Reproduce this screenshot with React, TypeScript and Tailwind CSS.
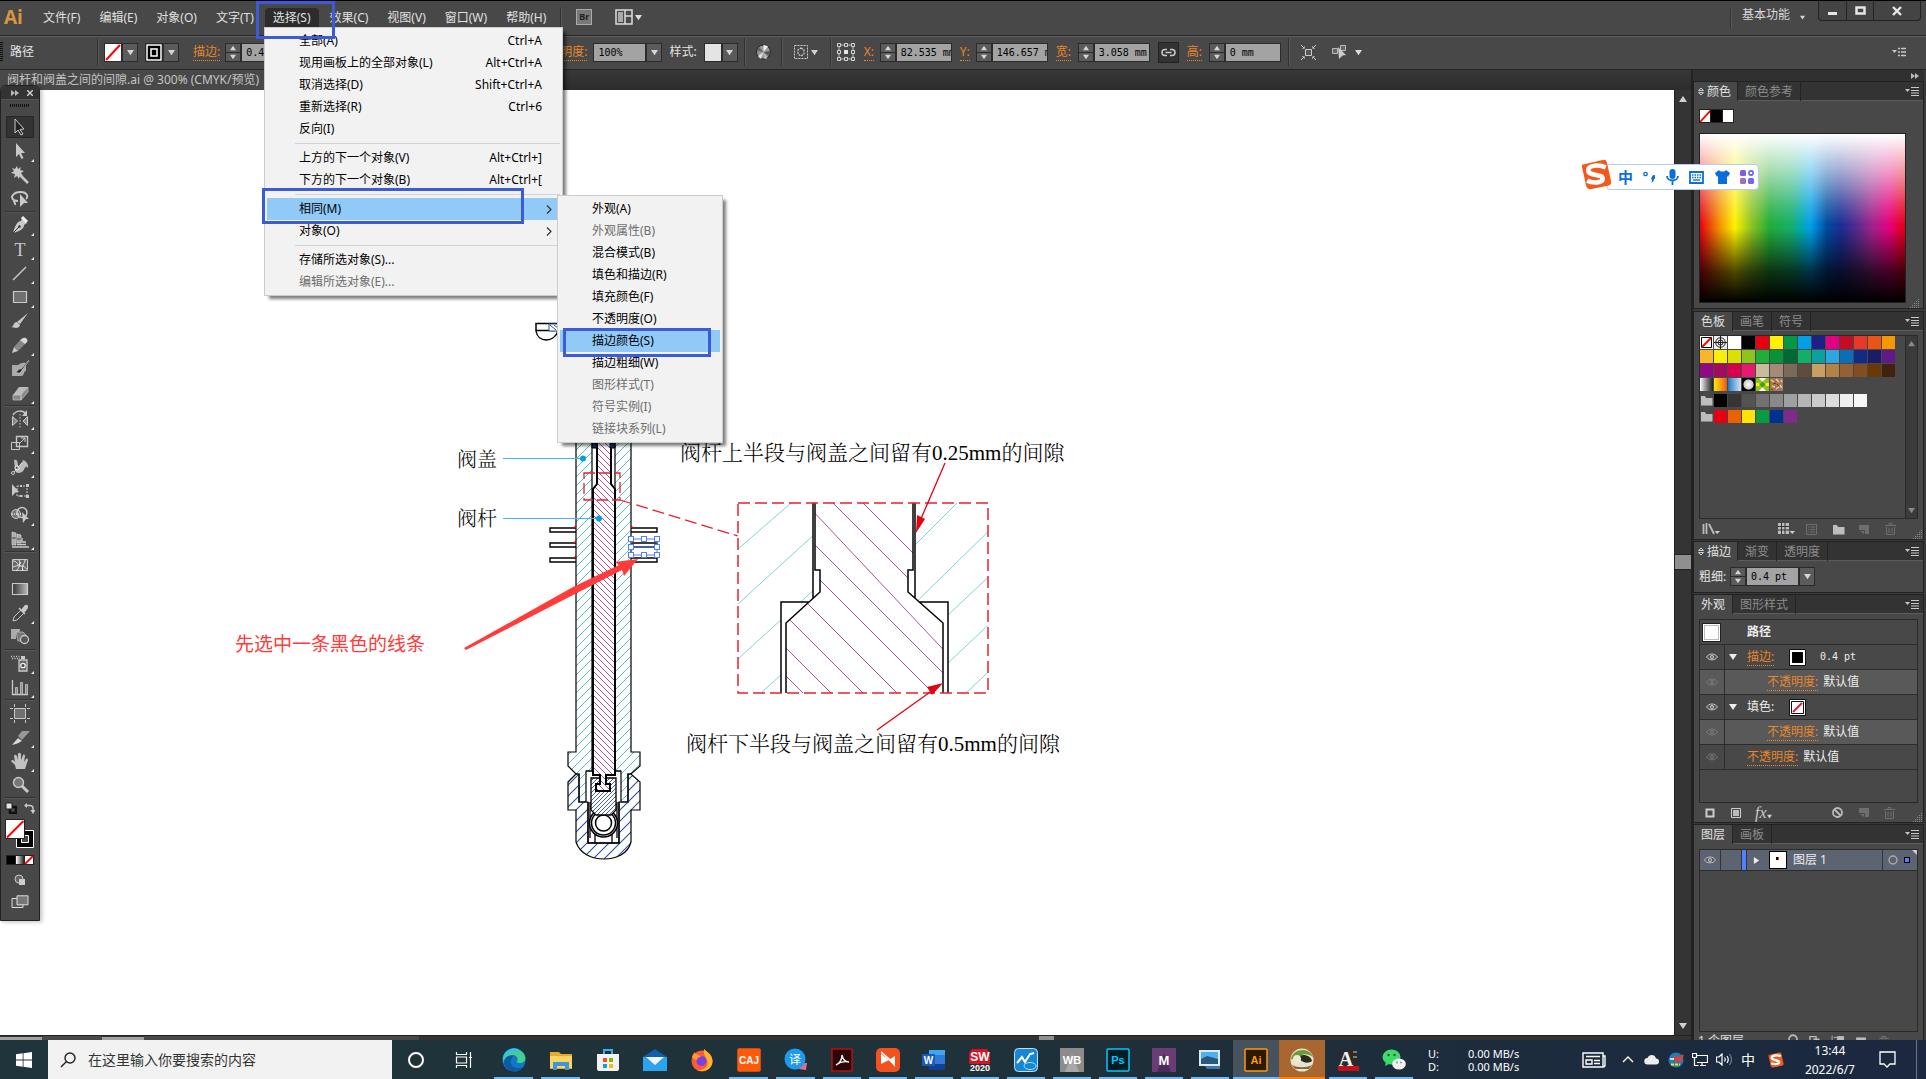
import React from "react";

type Kids = { children?: React.ReactNode };

const ORANGE = "text-[#e8862a]";

/* ---------- small shared pieces ---------- */

function Tri({ dir = "down", className = "", size = 7 }: { dir?: "down" | "up" | "right"; className?: string; size?: number }) {
  const d = dir === "down" ? "M0 1h8L4 7z" : dir === "up" ? "M0 7h8L4 1z" : "M1 0v8l6-4z";
  return (
    <svg width={size} height={size} viewBox="0 0 8 8" className={"shrink-0 " + className} aria-hidden="true">
      <path d={d} fill="currentColor" />
    </svg>
  );
}

function Sep() {
  return <div className="h-7 w-[2px] shrink-0 border-l border-[#333] bg-[#575757]" />;
}

function Spinner() {
  return (
    <div className="flex h-[19px] w-4 shrink-0 flex-col border border-[#2b2b2b] bg-[#5b5b5b] text-[#d6d6d6]">
      <button aria-label="增加" className="flex flex-1 items-center justify-center border-b border-[#2b2b2b]">
        <Tri dir="up" size={6} />
      </button>
      <button aria-label="减少" className="flex flex-1 items-center justify-center">
        <Tri size={6} />
      </button>
    </div>
  );
}

function DropBtn({ label }: { label: string }) {
  return (
    <button aria-label={label} className="flex h-[19px] w-4 shrink-0 items-center justify-center border border-[#2b2b2b] bg-[#5b5b5b] text-[#d6d6d6]">
      <Tri />
    </button>
  );
}

function Field({ id, value, w }: { id: string; value: string; w: string }) {
  return (
    <input
      id={id}
      defaultValue={value}
      className={"h-[19px] shrink-0 border border-[#2b2b2b] bg-[#a3a3a3] pl-1 font-['DejaVu_Sans_Mono',monospace] text-[10px] text-black outline-none " + w}
    />
  );
}

function OrangeLabel({ htmlFor, children }: Kids & { htmlFor?: string }) {
  return (
    <label htmlFor={htmlFor} className={"shrink-0 whitespace-nowrap border-b border-dotted border-[#e8862a] text-xs leading-4 " + ORANGE}>
      {children}
    </label>
  );
}

function PanelMenuIcon({ className = "" }: { className?: string }) {
  return (
    <svg width="14" height="9" viewBox="0 0 14 9" className={className} aria-hidden="true">
      <path d="M0 2h5L2.500 5z" fill="#c8c8c8" />
      <path d="M6 .5h8M6 3.500h8M6 6h8M6 8.500h8" stroke="#c8c8c8" />
    </svg>
  );
}

/* ---------- menu bar ---------- */

const menuNames = ["文件(F)", "编辑(E)", "对象(O)", "文字(T)", "选择(S)", "效果(C)", "视图(V)", "窗口(W)", "帮助(H)"];

function MenuBar() {
  return (
    <header className="flex h-9 shrink-0 items-start border-t border-b border-t-black border-b-[#2a2a2a] bg-[#484848] pr-[5px]">
      <div className="mt-1 w-[30px] pl-1 font-['Open_Sans',sans-serif] text-[19px] leading-6 font-bold text-[#d9963c]">Ai</div>
      <nav className="mt-[7px] flex gap-[3px] pl-[5px]">
        {menuNames.map((m) => (
          <button
            key={m}
            className={
              "h-[19px] px-2 text-xs whitespace-nowrap " + (m === "选择(S)" ? "rounded-t-sm bg-[#2c2c2c] text-[#e0e0e0]" : "text-[#e0e0e0]")
            }
          >
            {m}
          </button>
        ))}
      </nav>
      <div className="mt-[6px] ml-[6px] h-5 w-[2px] border-l border-[#333] bg-[#575757]" />
      <button aria-label="Bridge" className="mt-2 ml-[14px] h-4 w-4 border border-[#aaa] bg-[#777] text-[9px] leading-[14px] font-bold text-[#222]">
        Br
      </button>
      <button aria-label="排列文档" className="mt-2 ml-[23px] flex items-center gap-[2px] text-[#ddd]">
        <svg width="18" height="16" viewBox="0 0 18 16">
          <path d="M1 1h16v14H1zM10 1v14M10 7h7" fill="#4a4a4a" stroke="#ddd" strokeWidth="1.500" />
          <path d="M3 3h5v10H3z" fill="#aaa" />
        </svg>
        <Tri />
      </button>
      <div className="flex-1" />
      <div className="mt-2 h-5 w-[2px] border-l border-[#333] bg-[#575757]" />
      <button className="mt-[6px] ml-[10px] flex items-center gap-[10px] pr-[13px] text-xs text-[#d8d8d8]">
        基本功能 <Tri size={5} className="mt-1" />
      </button>
      <div className="flex h-5 divide-x divide-[#222] rounded-b border border-t-0 border-[#222] bg-[#444]">
        <button aria-label="最小化" className="flex w-7 items-center justify-center">
          <svg width="9" height="11">
            <path d="M0 7h9v3H0z" fill="#e6e6e6" />
          </svg>
        </button>
        <button aria-label="最大化" className="flex w-[27px] items-center justify-center">
          <svg width="11" height="10">
            <path d="M1.500 1.500h8v6h-8z" fill="none" stroke="#e6e6e6" strokeWidth="2.500" />
          </svg>
        </button>
        <button aria-label="关闭" className="flex w-[46px] items-center justify-center">
          <svg width="10" height="10">
            <path d="M1 1l8 8M9 1L1 9" stroke="#e6e6e6" strokeWidth="2.400" />
          </svg>
        </button>
      </div>
    </header>
  );
}

function ControlBar() {
  return (
    <div className="flex h-[34px] shrink-0 items-center border-t border-b border-t-[#5c5c5c] border-b-[#262626] bg-[#484848] pb-[2px] text-xs text-[#e4e4e4]">
      <svg width="4" height="20" className="shrink-0">
        <path d="M1.500 0v20" stroke="#111" strokeWidth="3" strokeDasharray="1 1" />
      </svg>
      <span className="ml-[6px] w-[87px]">路径</span>
      <Sep />
      <div className="ml-[5px] flex">
        <svg width="18" height="19" className="border border-[#2b2b2b] bg-white">
          <path d="M1 16L15 1" stroke="#f00" strokeWidth="2" />
        </svg>
        <DropBtn label="填色" />
      </div>
      <div className="ml-[7px] flex">
        <svg width="18" height="19" className="border border-[#2b2b2b] bg-black">
          <path d="M1 1h14v15H1zM5 5h6v7H5z" fill="none" stroke="#fff" strokeWidth="1.500" />
        </svg>
        <DropBtn label="描边颜色" />
      </div>
      <div className="ml-[14px] flex items-center gap-[5px]">
        <OrangeLabel htmlFor="sw">描边:</OrangeLabel>
        <div className="flex">
          <Spinner />
          <Field id="sw" value="0.4 pt" w="w-[53px]" />
          <DropBtn label="粗细" />
        </div>
      </div>
      <div className="w-[226px] shrink-0" />
      <div className="flex items-center gap-[6px]">
        <OrangeLabel htmlFor="op">不透明度:</OrangeLabel>
        <div className="flex">
          <Field id="op" value="100%" w="w-[53px]" />
          <DropBtn label="不透明度" />
        </div>
      </div>
      <span className="ml-[7px]">样式:</span>
      <div className="ml-[7px] flex">
        <div className="h-[19px] w-[18px] border border-[#2b2b2b] bg-[#e4e4e4]" />
        <DropBtn label="图形样式" />
      </div>
      <div className="ml-[6px]">
        <Sep />
      </div>
      <svg width="15" height="16" viewBox="0 0 15 16" className="ml-[10px]">
        <circle cx="7.500" cy="8" r="7" fill="#999" stroke="#222" />
        <path d="M7.500 8V1A7 7 0 0 1 12 2.500z" fill="#eee" />
        <path d="M7.500 8L2 12a7 7 0 0 0 3 3z" fill="#ddd" />
        <path d="M7.500 8l7-1a7 7 0 0 1-2 5z" fill="#555" />
        <path d="M7.500 8L1 7a7 7 0 0 1 2-4z" fill="#666" />
        <path d="M7.500 8l1 7a7 7 0 0 0 3-1z" fill="#bbb" />
      </svg>
      <div className="ml-[10px]">
        <Sep />
      </div>
      <button aria-label="重新着色" className="ml-[11px] flex items-center gap-[3px] text-[#d0d0d0]">
        <svg width="14" height="14" viewBox="0 0 14 14">
          <path d="M.5.5h13v13H.5z" fill="none" stroke="#ccc" strokeDasharray="2 1" />
          <path d="M7 3l3 2v4l-3 2-3-2V5z" fill="none" stroke="#ccc" strokeWidth="1.300" strokeDasharray="2 1" />
        </svg>
        <Tri />
      </button>
      <div className="ml-3">
        <Sep />
      </div>
      <svg width="20" height="20" viewBox="0 0 20 20" className="ml-1 shrink-0">
        <path d="M3 3h14v14H3z" fill="none" stroke="#bbb" />
        <path d="M1.500 1.500h3v3h-3zM8.500 1.500h3v3h-3zM15.500 1.500h3v3h-3zM1.500 8.500h3v3h-3zM15.500 8.500h3v3h-3zM1.500 15.500h3v3h-3zM8.500 15.500h3v3h-3zM15.500 15.500h3v3h-3z" fill="#484848" stroke="#d6d6d6" />
        <path d="M8 8h4v4H8z" fill="#e6e6e6" />
      </svg>
      <Measure id="x" label="X:" value="82.535 mm" lw="w-4" />
      <Measure id="y" label="Y:" value="146.657 mm" lw="w-4" />
      <Measure id="w" label="宽:" value="3.058 mm" lw="w-[22px]" />
      <button aria-label="约束宽度和高度比例" className="ml-2 flex h-[21px] w-[21px] shrink-0 items-center justify-center border border-[#222] bg-[#333]">
        <svg width="15" height="9" viewBox="0 0 15 9">
          <path d="M6 1.500H4a3 3 0 0 0 0 6h2M9 1.500h2a3 3 0 0 1 0 6H9M4.500 4.500h6" fill="none" stroke="#ccc" strokeWidth="1.500" />
        </svg>
      </button>
      <Measure id="h" label="高:" value="0 mm" lw="w-[22px]" />
      <div className="ml-[7px]">
        <Sep />
      </div>
      <svg width="15" height="15" viewBox="0 0 15 15" className="ml-[11px] shrink-0">
        <path d="M4.500 4.500h6v6h-6z" fill="#555" stroke="#ccc" />
        <path d="M0 0l3 3M15 0l-3 3M0 15l3-3M15 15l-3-3" stroke="#ccc" />
        <path d="M3.500 1v2.500H1M11.500 1v2.500H14M3.500 14v-2.500H1M11.500 14v-2.500H14" fill="none" stroke="#999" />
      </svg>
      <button aria-label="选择类似对象" className="ml-[15px] flex items-center gap-[7px] text-[#ddd]">
        <svg width="17" height="16" viewBox="0 0 17 16">
          <path d="M1.500 4.500h5v5h-5zM9.500 1.500h5v5h-5z" fill="#666" stroke="#bbb" />
          <path d="M7 3l8 8-3.500.5L8 15z" fill="#ccc" />
        </svg>
        <Tri />
      </button>
      <div className="flex-1" />
      <svg width="14" height="10" viewBox="0 0 14 10" className="mr-5">
        <path d="M0 3h5L2.500 6z" fill="#c8c8c8" />
        <path d="M6 1.500h2M9 1.500h5M6 5h2M9 5h5M6 8.500h2M9 8.500h5" stroke="#c8c8c8" strokeWidth="1.500" />
      </svg>
    </div>
  );
}

function Measure({ id, label, value, lw }: { id: string; label: string; value: string; lw: string }) {
  return (
    <div className="ml-2 flex shrink-0 items-center">
      <div className={"flex shrink-0 " + lw}>
        <OrangeLabel htmlFor={id}>{label}</OrangeLabel>
      </div>
      <Spinner />
      <Field id={id} value={value} w="w-14" />
    </div>
  );
}

/* ---------- select menu ---------- */

type Item = { t: string; k?: string; dis?: boolean; hi?: boolean; sub?: boolean } | null;

const selectMenu: Item[] = [
  { t: "全部(A)", k: "Ctrl+A" },
  { t: "现用画板上的全部对象(L)", k: "Alt+Ctrl+A" },
  { t: "取消选择(D)", k: "Shift+Ctrl+A" },
  { t: "重新选择(R)", k: "Ctrl+6" },
  { t: "反向(I)" },
  null,
  { t: "上方的下一个对象(V)", k: "Alt+Ctrl+]" },
  { t: "下方的下一个对象(B)", k: "Alt+Ctrl+[" },
  null,
  { t: "相同(M)", hi: true, sub: true },
  { t: "对象(O)", sub: true },
  null,
  { t: "存储所选对象(S)..." },
  { t: "编辑所选对象(E)...", dis: true },
];

const sameMenu: Item[] = [
  { t: "外观(A)" },
  { t: "外观属性(B)", dis: true },
  { t: "混合模式(B)" },
  { t: "填色和描边(R)" },
  { t: "填充颜色(F)" },
  { t: "不透明度(O)" },
  { t: "描边颜色(S)", hi: true },
  { t: "描边粗细(W)" },
  { t: "图形样式(T)", dis: true },
  { t: "符号实例(I)", dis: true },
  { t: "链接块系列(L)", dis: true },
];

function PopupMenu({ items, className }: { items: Item[]; className: string }) {
  return (
    <ul role="menu" className={"absolute border border-[#ccc] bg-[#f2f2f2] p-[2px] text-xs shadow-[4px_4px_3px_-1px_rgba(0,0,0,0.5)] " + className}>
      {items.map((it, i) =>
        it === null ? (
          <li key={i} role="separator" className="flex h-[7px] items-center pl-7">
            <div className="h-px w-full bg-[#d4d4d4]" />
          </li>
        ) : (
          <li key={i} role="none">
            <button
              role="menuitem"
              disabled={it.dis}
              className={
                "flex h-[22px] w-full items-center pr-[18px] pl-8 whitespace-nowrap " + (it.hi ? "bg-[#91c9f7] " : "") + (it.dis ? "text-[#6d6d6d]" : "text-black")
              }
            >
              <span className="flex-1 text-left">{it.t}</span>
              {it.k && <span>{it.k}</span>}
              {it.sub && (
                <svg width="6" height="9" viewBox="0 0 6 9" className="-mr-[10px]">
                  <path d="M1 .5l4 4-4 4" fill="none" stroke="#333" strokeWidth="1.200" />
                </svg>
              )}
            </button>
          </li>
        ),
      )}
    </ul>
  );
}

/* ---------- left tools ---------- */

const L = "#c9c9c9";
const toolIcons: React.ReactNode[][] = [
  [
    <path key="a" d="M5 2l9 10-4 .5 3 4.500-2 1-3-5-3 3z" fill="#222" stroke={L} />,
    <path key="a" d="M6 2l9 10h-4l2.500 5-2 1L9 13l-3 3z" fill={L} />,
    <g key="a"><path d="M7 1l1 3 3-2-1 3 4 1-3 2 2 3-3-1-1 4-2-3-3 2 1-4-4-1 3-2-2-3 3 1z" fill={L} /><path d="M10 10l8 8" stroke={L} strokeWidth="2.500" /></g>,
    <g key="a"><path d="M8 12C2 12 1 8 3 6c3-4 12-4 14 0 1 2 0 3-1 4M4 11c-1 3 2 2 1 5" fill="none" stroke={L} strokeWidth="1.800" /><path d="M10 5l8 9h-4l-4 4z" fill={L} /></g>,
  ],
  [
    <g key="a"><path d="M12 3l5 5-3 2c0 4-4 6-11 8C5 11 7 6 11 6z" fill={L} /><path d="M3 18l6-6" stroke="#333" /><circle cx="9.500" cy="11.500" r="1.200" fill="#333" /><path d="M12 2l5 5" stroke="#eee" strokeWidth="3" /></g>,
    <text key="a" x="10" y="16.500" textAnchor="middle" fontSize="18" fontFamily="Liberation Serif" fill={L}>T</text>,
    <path key="a" d="M3 17L16 4" stroke={L} strokeWidth="1.500" />,
    <path key="a" d="M3.500 4.500h13v11h-13z" fill="#707070" stroke={L} strokeWidth="1.200" />,
    <g key="a"><path d="M18 2l-8 11-3-2z" fill={L} /><path d="M7 11l3 3c-1 4-5 3-9 2 3 0 2-5 6-5z" fill={L} /></g>,
    <g key="a"><path d="M4 12l8-9 5 4-9 9z" fill="#888" /><path d="M4 12l4 4-6 2z" fill={L} /><path d="M12 4c2-3 7 0 5 3l-2 2-5-4z" fill="#d8d8d8" /></g>,
    <g key="a"><path d="M2 6h6c2-1 4-3 8-2v8c-3 0-1 5-5 5H2z" fill="#aaa" /><path d="M19 1l-8 9c-2-1-3 3-6 3 4 2 6 1 7-2l7-9" fill="#222" stroke={L} strokeWidth=".7" /></g>,
    <g key="a"><path d="M9 4h9l-7 8H3z" fill="#bbb" /><path d="M3 12h8v5H3zM11 12l7-8v5l-7 8z" fill="#888" stroke={L} strokeWidth=".7" /></g>,
  ],
  [
    <g key="a"><path d="M3 6c3-5 10-5 13-1" fill="none" stroke={L} strokeWidth="1.500" /><path d="M17 1v6h-5z" fill={L} /><path d="M2.500 7.500v9l5-4.500zM17.500 7.500v9L13 12z" fill="#888" stroke={L} /><path d="M10 5v14" stroke={L} strokeDasharray="1.500 1.500" /></g>,
    <g key="a" fill="none" stroke={L}><path d="M6.500 3.500h11v10h-11z" strokeWidth="1.400" /><path d="M1.500 9.500h8v7h-8z" /><path d="M10 10l5-5M11 5h4v4" /></g>,
    <g key="a"><path d="M4 3c5-2 3 6 5 8 1-6 3-4 4-8 4 1 6 6 5 8-3-4-3 2-6 4-4 2-7 1-7-3z" fill="#bbb" /><circle cx="3" cy="16" r="1.500" fill="none" stroke={L} /><circle cx="7" cy="11" r="2" fill="#444" stroke="#fff" /><path d="M4 15l8-9" stroke="#fff" strokeWidth=".7" /></g>,
    <g key="a"><path d="M7 5h10v10H7z" fill="none" stroke={L} strokeDasharray="2 1" /><path d="M2 3l7 8H6l-4 4z" fill={L} /><path d="M16 3h3v3h-3zM16 14h3v3h-3zM10 4h2v2h-2zM10 14h2v2h-2z" fill={L} /></g>,
    <g key="a"><circle cx="6" cy="9" r="4.500" fill="#777" stroke={L} /><circle cx="12" cy="7.500" r="5" fill="none" stroke={L} strokeWidth="1.500" /><path d="M2 9h10" stroke="#fff" strokeDasharray="1 1" /><path d="M12 7l7 7h-3l-3 4z" fill={L} /></g>,
    <g key="a"><path d="M2 3l4 1v12H2zM7 5l4 1v8H7z" fill="#aaa" stroke="#ddd" strokeWidth=".6" /><path d="M2 9h4M7 10h4" stroke="#444" /><path d="M2 18h17M7 15.500h9M12 9v4h4" fill="none" stroke={L} strokeWidth="1.300" /></g>,
  ],
  [
    <g key="a"><path d="M2.500 4.500h15v11h-15z" fill="#666" stroke={L} /><path d="M3 6c5 0 4 5 8 5s4 2 6 3M6 16c3-3 5-7 3-11M13 16c-2-6 2-7 2-11M3 12c4-2 6 0 8-5" fill="none" stroke="#eee" /></g>,
    <path key="a" d="M2.500 4.500h15v11h-15z" fill="url(#toolGrad)" stroke={L} strokeWidth="1.200" />,
    <g key="a"><path d="M3 18l1-4 7-7 3 3-7 7z" fill="#444" stroke={L} /><path d="M9 5l6 6M12 7l3-4c2-1 3 0 2 2l-3 4z" fill={L} stroke={L} strokeWidth="1.500" /></g>,
    <g key="a"><path d="M1 2h9v2L6 7v5H1z" fill="#aaa" /><path d="M6 5h7l3 3v6H8z" fill="#777" stroke={L} strokeWidth=".7" /><circle cx="14.500" cy="12.500" r="4" fill="#555" stroke={L} strokeWidth="1.300" /></g>,
  ],
  [
    <g key="a"><path d="M9 7h8v11H9z" fill="#666" stroke={L} strokeWidth="1.300" /><path d="M11 3h4v3h-4z" fill={L} /><circle cx="13" cy="12.500" r="2.200" fill="#444" stroke="#eee" strokeWidth="1.300" /><path d="M1 3.500h9M2 5.500h8" stroke={L} strokeDasharray="1 1.500" strokeWidth="1.400" /></g>,
    <g key="a"><path d="M2.500 3v14.500H18" fill="none" stroke={L} strokeWidth="1.300" /><path d="M5.500 10.500h2v7h-2zM10.500 5.500h2v12h-2zM15.500 7.500h2v10h-2z" fill="#888" stroke={L} strokeWidth=".8" /></g>,
  ],
  [
    <g key="a"><path d="M4.500 5.500h11v10h-11z" fill="#707070" stroke={L} /><path d="M0 5.500h3M17 5.500h3M0 15.500h3M17 15.500h3M4.500 1v3M4.500 17v3M15.500 1v3M15.500 17v3" stroke={L} /></g>,
    <g key="a"><path d="M2 18l6-7 4 3c-3 2-6 3-10 4z" fill="#d8d8d8" /><path d="M8 9l4-5h8l-8 9z" fill="#999" /></g>,
    <path key="a" d="M6 18l-1-4-4-4c1-2 3-1 4 1L4 5c1-2 2-1 3 0l1 4V3c1-2 2-1 3 0v6l2-5c1-1 2 0 2 1l-1 6 2-3c1-1 2 0 2 1l-2 6-1 3z" fill="#c2c2c2" />,
    <g key="a"><circle cx="8.500" cy="7.500" r="5" fill="#777" stroke={L} strokeWidth="1.400" /><path d="M12 11l6 6" stroke={L} strokeWidth="3" /></g>,
  ],
];
const noFlyout = new Set(["0-0", "0-2", "0-3", "1-4", "1-6", "2-3", "3-0", "3-1", "3-3", "5-0", "5-3"]);
const toolNames = [
  ["选择工具", "直接选择工具", "魔棒工具", "套索工具"],
  ["钢笔工具", "文字工具", "直线段工具", "矩形工具", "画笔工具", "铅笔工具", "斑点画笔工具", "橡皮擦工具"],
  ["镜像工具", "比例缩放工具", "变形工具", "自由变换工具", "形状生成器工具", "透视网格工具"],
  ["网格工具", "渐变工具", "吸管工具", "混合工具"],
  ["符号喷枪工具", "柱形图工具"],
  ["画板工具", "切片工具", "抓手工具", "缩放工具"],
];

function ToolPanel() {
  return (
    <aside className="absolute top-[85px] left-0 z-10 w-10 rounded-t-md border border-[#222] bg-[#484848] shadow-[2px_1px_4px_rgba(0,0,0,0.25)]">
      <div className="flex h-[13px] items-center justify-end gap-2 rounded-t-md bg-[#333] pr-[6px]">
        <svg width="8" height="6" viewBox="0 0 8 6">
          <path d="M0 0l4 3-4 3zM4 0l4 3-4 3z" fill="#bbb" />
        </svg>
        <svg width="6" height="6" viewBox="0 0 6 6">
          <path d="M0 0l6 6M6 0L0 6" stroke="#ccc" strokeWidth="1.500" />
        </svg>
      </div>
      <div className="flex h-4 items-start justify-center border-t border-[#555] pt-1">
        <svg width="20" height="3">
          <path d="M0 1.500h20" stroke="#111" strokeWidth="3" strokeDasharray="1 1" />
        </svg>
      </div>
      <svg width="0" height="0" className="absolute">
        <linearGradient id="toolGrad">
          <stop offset="0" stopColor="#333" />
          <stop offset="1" stopColor="#bbb" />
        </linearGradient>
      </svg>
      <div className="flex flex-col">
        {toolIcons.map((g, gi) => (
          <div key={gi} className="flex flex-col">
            {g.map((ic, i) => (
              <div key={i} className="flex h-6 items-center justify-center">
                <button
                  aria-label={toolNames[gi][i]}
                  className={"relative flex h-[22px] w-7 items-center justify-center " + (gi === 0 && i === 0 ? "border border-[#262626] bg-[#333]" : "")}
                >
                  <svg width="20" height="20" viewBox="0 0 20 20">{ic}</svg>
                  {!noFlyout.has(gi + "-" + i) && (
                    <svg width="3" height="3" className="absolute right-0 bottom-0">
                      <path d="M3 0v3H0z" fill="#eee" />
                    </svg>
                  )}
                </button>
              </div>
            ))}
            <div className="mx-1 h-[2px] border-t border-[#333] bg-[#555]" />
          </div>
        ))}
      </div>
      <div className="flex h-[18px] items-center justify-between px-1">
        <svg width="12" height="12" viewBox="0 0 12 12">
          <path d="M5 5h6v6H5z" fill="none" stroke="#111" strokeWidth="2.500" />
          <path d="M1 1h6v6H1z" fill="#e6e6e6" stroke="#222" />
        </svg>
        <svg width="11" height="11" viewBox="0 0 11 11">
          <path d="M2 2.500h4c2 0 3 1 3 3V8" fill="none" stroke={L} strokeWidth="1.400" />
          <path d="M3 0v5L0 2.500zM6.500 7h5L9 11z" fill={L} />
        </svg>
      </div>
      <svg width="30" height="32" viewBox="0 0 30 32" className="mx-auto mt-px">
        <path d="M11.500 12.500h17v17h-17z" fill="#000" stroke="#fff" />
        <path d="M16.500 17.500h7v7h-7z" fill="#484848" stroke="#fff" />
        <path d="M.5 1.500h19v19H.5z" fill="#fff" stroke="#222" />
        <path d="M2 19.500L18.500 3" stroke="#f00" strokeWidth="2" />
      </svg>
      <svg width="28" height="10" viewBox="0 0 28 10" className="mx-auto mt-[5px]">
        <linearGradient id="bw">
          <stop offset="0" stopColor="#fff" />
          <stop offset="1" stopColor="#222" />
        </linearGradient>
        <path d="M0 0h28v10H0z" fill="#222" />
        <path d="M1 1h8v8H1z" fill="#000" />
        <path d="M10 1h8v8h-8z" fill="url(#bw)" />
        <path d="M19 1h8v8h-8z" fill="#fff" />
        <path d="M19 9l8-8" stroke="#f00" strokeWidth="1.800" />
      </svg>
      <div className="flex h-[30px] items-center justify-center">
        <svg width="12" height="12" viewBox="0 0 12 12">
          <circle cx="5" cy="5" r="4" fill="#666" stroke={L} />
          <path d="M5 5h6v6H5z" fill="#ccc" />
        </svg>
      </div>
      <div className="flex h-[25px] items-start justify-center">
        <svg width="18" height="14" viewBox="0 0 18 14">
          <path d="M1 3.500h11v9H1z" fill="#555" stroke="#ddd" />
          <path d="M6 .8h11v9H6z" fill="#777" stroke="#ddd" />
        </svg>
      </div>
    </aside>
  );
}

/* ---------- artwork ---------- */

const handles: [number, number][] = [
  [631, 539], [644, 539], [657, 539], [631, 547], [657, 547], [631, 555], [644, 555], [657, 555],
];

function Artwork() {
  return (
    <svg className="absolute top-0 left-0" width="1200" height="800" viewBox="0 90 1200 800" role="img" aria-label="阀杆与阀盖间隙示意图">
      <defs>
        <pattern id="hc" width="9" height="9" patternUnits="userSpaceOnUse">
          <path d="M-1 10L10-1M-1 1L1-1M8 10l2-2" stroke="#55c4bf" strokeWidth="1" />
        </pattern>
        <pattern id="hp" width="6" height="6" patternUnits="userSpaceOnUse">
          <path d="M-1-1l8 8M5-1l2 2M-1 5l2 2" stroke="#b0539f" strokeWidth="1" />
        </pattern>
        <pattern id="hb" width="11" height="11" patternUnits="userSpaceOnUse">
          <path d="M-1 12L12-1M-1 1L1-1M10 12l2-2" stroke="#2d4f9e" strokeWidth="1.100" />
        </pattern>
        <pattern id="hd" width="4" height="4" patternUnits="userSpaceOnUse">
          <path d="M-1 5l6-6M-1 1l2-2M3 5l2-2" stroke="#2d4f9e" strokeWidth=".9" />
        </pattern>
        <clipPath id="dc1"><path d="M738 503h75v95l-4 4h-28v91h-43z" /></clipPath>
        <clipPath id="dc2"><path d="M915 503h73v190h-40v-91h-29l-4-4z" /></clipPath>
        <clipPath id="dc3"><path d="M815 503h98v67h-5v22l35 31v70H786v-70l34-31v-22h-5z" /></clipPath>
      </defs>
      {/* small clipped symbol */}
      <path d="M536 323.500h22v7h-22zM536 331c2 12 18 12 22 0" fill="#fff" stroke="#000" strokeWidth="1.500" />
      <path d="M549 324h9v7h-9z" fill="#fff" stroke="#2d4f9e" />
      <path d="M550 325l6 5M554 325l5 4" stroke="#2d4f9e" />

      {/* cover body */}
      <path d="M576 430V752h-8v14l8 8h3v28h7v-31h6V430zM631 430V752h9v14l-9 8h-3v28h-7v-31h-6V430z" fill="#fff" />
      <path d="M576 430V752h-8v14l8 8h3v28h7v-31h6V430zM631 430V752h9v14l-9 8h-3v28h-7v-31h-6V430z" fill="url(#hc)" stroke="#000" strokeWidth="1.200" />
      {/* lower nut */}
      <path d="M576 774l-8 8v28h8v32c4 12 16 17 28 17s24-5 27-17v-32h9v-28l-9-8h-3v28h-9v41h-31v-41h-9v-28z" fill="url(#hb)" stroke="#000" strokeWidth="1.200" />
      <path d="M588 802v41h31v-41M590 802v36M617 802v36M595 832v11M612 832v11" fill="none" stroke="#000" strokeWidth="1.300" />
      <path d="M586 771h35" stroke="#000" />
      <circle cx="603.500" cy="823" r="14" fill="#fff" stroke="#000" strokeWidth="1.500" />
      <circle cx="603.500" cy="823" r="12" fill="none" stroke="#000" strokeWidth="1.500" />
      <circle cx="603.500" cy="823" r="8" fill="none" stroke="#000" strokeWidth="1.500" />
      <path d="M591 778h9v6h-4v7h14v-7h-4v-6h10v32l-5 5h-15l-5-5z" fill="#fff" />
      <path d="M591 778h9v6h-4v7h14v-7h-4v-6h10v32l-5 5h-15l-5-5z" fill="url(#hd)" stroke="#000" strokeWidth="1.300" />
      {/* stem */}
      <path d="M597 430v54l-4 5v286h7v9h-4v7h14v-7h-4v-9h9V489l-4-5v-54z" fill="#fff" />
      <path d="M597 430v54l-4 5v286h7v9h-4v7h14v-7h-4v-9h9V489l-4-5v-54z" fill="url(#hp)" stroke="#000" strokeWidth="2" />
      <path d="M592 443h5v5h-5zM610 443h5v5h-5z" fill="#1d2c5b" stroke="#000" />

      {/* fins */}
      <path d="M576 528h-26v4h26M576 543h-26v4h26M576 558h-26v4h26M631 528h26v4h-26M631 543h26v4h-26M631 558h26v4h-26" fill="none" stroke="#000" strokeWidth="1.400" />
      <path d="M576 525v3h-3zM576 540v3h-3zM576 555v3h-3zM631 525v3h3zM631 540v3h3z" fill="#e60012" />
      <path d="M631 539h26v16h-26zM631 547h26" fill="none" stroke="#4f80ff" />
      {handles.map(([x, y]) => (
        <rect key={x + "-" + y} x={x - 2.5} y={y - 2.5} width="5" height="5" fill="#fff" stroke="#4f80ff" />
      ))}

      {/* callouts */}
      <g stroke="#e6202e" fill="none" strokeWidth="1.300">
        <path d="M584 473h36v27h-36z" strokeDasharray="11 4" />
        <path d="M620 500l118 36" strokeDasharray="12 5" />
      </g>
      <path d="M503 458.500h80M503 518.500h96" stroke="#3fb8ee" />
      <circle cx="583" cy="458.500" r="3" fill="#00a0e9" />
      <circle cx="599" cy="518.500" r="3" fill="#00a0e9" />

      {/* magnified detail */}
      <g clipPath="url(#dc1)" stroke="#7fd3d3">
        <path d="M738 549l60-52M738 604l90-82M738 659l90-82M738 714l90-82" />
      </g>
      <g clipPath="url(#dc2)" stroke="#7fd3d3">
        <path d="M900 560l60-60M900 618l100-98M930 632l70-66M930 680l70-66M930 727l70-66" />
      </g>
      <g clipPath="url(#dc3)" stroke="#a8569c">
        <path d="M860 500l60 60M810 480l140 140M810 508l160 170M810 540l160 160M800 560l160 160M786 582l130 130M780 610l100 100M780 642l70 70M780 670l40 40" />
      </g>
      <g fill="none" stroke="#000" strokeWidth="1.500">
        <path d="M813 503v95M809 602h-28v91M815 503v67h5v22l-34 31v70" />
        <path d="M915 503v95M919 602h29v91M913 503v67h-5v22l35 31v70" />
      </g>
      <path d="M738 503h250v190H738z" fill="none" stroke="#e6202e" strokeWidth="1.500" strokeDasharray="12 5" />
      <g stroke="#e60012" fill="#e60012">
        <path d="M945 463l-25 58M877 730l56-40" strokeWidth="1.300" fill="none" />
        <path d="M916 533l1-18 8 4zM943 683l-16 4 5 8z" stroke="none" />
      </g>

      {/* labels */}
      <g fontFamily="'Liberation Serif','Noto Serif CJK SC','Noto Sans CJK SC',serif" fontSize="20" fontWeight="300" fill="#000">
        <text x="457" y="467">阀盖</text>
        <text x="457" y="526">阀杆</text>
        <text x="680" y="460" fontSize="21">阀杆上半段与阀盖之间留有0.25mm的间隙</text>
        <text x="686" y="751" fontSize="21">阀杆下半段与阀盖之间留有0.5mm的间隙</text>
      </g>
      <text x="235" y="651" fontSize="19" fontFamily="'Noto Sans CJK SC',sans-serif" fill="#ff3b3b">先选中一条黑色的线条</text>
      <path d="M464 648l109-61 46-22-4-3 23-3-14 17-2-6-45 23-111 57z" fill="#ff3b3b" />
    </svg>
  );
}

/* ---------- right panels ---------- */

function Tabs({ names, arrow }: { names: string[]; arrow?: boolean }) {
  return (
    <div role="tablist" className="flex h-[19px] shrink-0 border-b border-[#5c5c5c] bg-[#333] text-xs leading-[18px]">
      {names.map((n, i) => (
        <button
          key={n}
          role="tab"
          aria-selected={i === 0}
          className={
            "flex h-[19px] items-center whitespace-nowrap border-r border-[#242424] " +
            (i === 0 ? "bg-[#484848] text-[#e0e0e0] " + (arrow ? "pr-[6px] pl-1" : "px-[7px]") : "px-[7px] text-[#8c8c8c]")
          }
        >
          {i === 0 && arrow && (
            <svg width="6" height="9" viewBox="0 0 6 9" className="mr-[3px]">
              <path d="M.5 3.500L3 1l2.500 2.500zM.5 5.500L3 8l2.500-2.500z" fill="none" stroke="#ccc" />
            </svg>
          )}
          {n}
        </button>
      ))}
      <div className="flex-1" />
      <button aria-label="面板菜单" className="mr-1 flex items-center">
        <PanelMenuIcon />
      </button>
    </div>
  );
}

function Panel({ children, className = "" }: Kids & { className?: string }) {
  return <section className={"flex flex-col border border-[#222] bg-[#484848] " + className}>{children}</section>;
}

const spectrum =
  "bg-[linear-gradient(to_bottom,rgba(255,255,255,1)_0%,rgba(255,255,255,0.6)_22%,rgba(255,255,255,0.2)_42%,rgba(255,255,255,0)_54%,rgba(0,0,0,0)_56%,rgba(0,0,0,0.7)_82%,#000_100%),linear-gradient(to_right,#e60012_0%,#f39800_10%,#fff100_17%,#8fc31f_25%,#22ac38_34%,#16ae6a_44%,#00a9b5_50%,#00a0e9_54%,#004a9e_62%,#1d2c94_69%,#5c2a8c_77%,#a0228c_84%,#e4007f_92%,#e60012_100%)]";

const swatchRows = [
  ["none", "reg", "#ffffff", "#000000", "#e60012", "#fff100", "#009944", "#00a0e9", "#1d2088", "#e4007f", "#c30d23", "#e83828", "#ea5514", "#f39800"],
  ["#f8b62d", "#f7ed10", "#dbe000", "#8fc31f", "#22ac38", "#08933b", "#006934", "#13ae67", "#0aa29a", "#2ea7e0", "#0b6fb8", "#122b88", "#1b1c63", "#601986"],
  ["#920783", "#a50b5c", "#d7004f", "#e71a72", "#c9bc9c", "#a48b78", "#7b6a55", "#614b3e", "#c9a063", "#b28247", "#956134", "#814e20", "#6a3906", "#40220f"],
  ["g1", "g2", "g3", "g4", "g5", "g6"],
];
const greys = ["#000000", "#373433", "#555352", "#727171", "#898989", "#9fa0a0", "#b5b5b6", "#c9caca", "#dcdddd", "#efefef", "#f7f8f8"];
const brights = ["#e60012", "#eb6100", "#ffe10c", "#099b41", "#03308f", "#7c2d8c"];

function Swatch({ c }: { c: string }) {
  const cls = "h-[13px] w-[13px] shrink-0";
  if (c === "none")
    return (
      <svg viewBox="0 0 13 13" className={cls}>
        <path d="M0 0h13v13H0z" fill="#fff" />
        <path d="M1.500 1.500h10v10h-10z" fill="none" stroke="#000" />
        <path d="M2 11l9-9" stroke="#f00" strokeWidth="2" />
      </svg>
    );
  if (c === "reg")
    return (
      <svg viewBox="0 0 13 13" className={cls}>
        <path d="M0 0h13v13H0z" fill="#eee" />
        <circle cx="6.500" cy="6.500" r="4.800" fill="none" stroke="#222" />
        <circle cx="6.500" cy="6.500" r="2.500" fill="none" stroke="#222" />
        <path d="M6.500 0v13M0 6.500h13" stroke="#222" />
      </svg>
    );
  if (c === "g1") return <div className={cls + " bg-linear-to-r from-white to-[#222]"} />;
  if (c === "g2") return <div className={cls + " bg-linear-to-r from-[#ffe600] to-[#e95513]"} />;
  if (c === "g3") return <div className={cls + " bg-linear-to-r from-[#0b78c8] to-[#d5e4ef]"} />;
  if (c === "g4") return <div className={cls + " bg-[radial-gradient(circle,#fff_0,#ccc_50%,#000_60%)]"} />;
  if (c === "g5")
    return (
      <svg viewBox="0 0 13 13" className={cls}>
        <path d="M0 0h13v13H0z" fill="#8dc21f" />
        <path d="M3 0h7L6.500 4zM3 13h7L6.500 9z" fill="#fff" />
        <path d="M0 5h3v3H0zM10 5h3v3h-3z" fill="#fff100" />
        <circle cx="6.500" cy="6.500" r="3" fill="#22ac38" stroke="#f5c400" />
      </svg>
    );
  if (c === "g6")
    return (
      <svg viewBox="0 0 13 13" className={cls}>
        <path d="M0 0h13v13H0z" fill="#a67852" />
        <path d="M1 2l3 2M6 1l3 3M10 7l2 3M2 8l3 1M6 11l3-2M11 2l1 2" stroke="#e0cdb5" strokeWidth="1.500" />
        <path d="M3 6l3-1M7 6l2 2M1 11l2 1" stroke="#6a3906" />
      </svg>
    );
  return <div className={cls} style={{ backgroundColor: c }} />;
}

function Folder({ className = "" }: { className?: string }) {
  return (
    <svg width="13" height="13" viewBox="0 0 13 13" className={"shrink-0 " + className}>
      <path d="M1 2h4l1 2h6.500v7.500H1z" fill="#bdbdbd" />
    </svg>
  );
}

function Trash() {
  return (
    <svg width="11" height="12" viewBox="0 0 11 12">
      <path d="M0 2.500h11M4 2.500v-2h3v2M1.500 4v7.500h8V4M4 5v5M7 5v5" fill="none" stroke="#6e6e6e" />
    </svg>
  );
}

function NewIcon() {
  return (
    <svg width="11" height="11" viewBox="0 0 11 11">
      <path d="M0 1h10v9H6V6H0z" fill="#6e6e6e" />
      <path d="M1 7l4 3V7z" fill="#6e6e6e" />
    </svg>
  );
}

function Grip() {
  return (
    <svg width="9" height="9" viewBox="0 0 9 9" className="self-end">
      <path d="M0 8.500h9M2 6.500h7M4 4.500h5M6 2.500h3M8 .5h1" stroke="#8a8a8a" strokeDasharray="1 1" />
    </svg>
  );
}

function Eye({ dim }: { dim?: boolean }) {
  return (
    <svg width="12" height="8" viewBox="0 0 12 8" className={dim ? "opacity-35" : ""}>
      <path d="M.5 4C3 0 9 0 11.500 4 9 7.800 3 7.800.5 4z" fill="#555" stroke="#c4c4c4" />
      <circle cx="6" cy="4" r="2" fill="#c4c4c4" />
      <circle cx="6" cy="4" r=".8" fill="#222" />
    </svg>
  );
}

function ColorPanel() {
  return (
    <Panel>
      <Tabs names={["颜色", "颜色参考"]} arrow />
      <div className="flex h-[207px] flex-col pt-2 pr-1 pl-[5px]">
        <div className="flex h-[14px] w-[35px] divide-x divide-[#222] border border-[#222]">
          <svg width="11" height="12" className="shrink-0 bg-white">
            <path d="M0 12L11 0" stroke="#f00" strokeWidth="1.800" />
          </svg>
          <div className="flex-1 bg-[#070202]" />
          <div className="flex-1 bg-white" />
        </div>
        <div className={"mt-[10px] mr-[13px] h-[170px] border border-[#222] " + spectrum} />
        <div className="ml-auto -mt-1">
          <Grip />
        </div>
      </div>
    </Panel>
  );
}

function SwatchPanel() {
  return (
    <Panel className="mt-[2px]">
      <Tabs names={["色板", "画笔", "符号"]} />
      <div className="mx-[5px] mt-1 flex h-[184px] border border-[#2a2a2a]">
        <div className="flex flex-1 flex-col gap-px">
          {swatchRows.map((r, i) => (
            <div key={i} className="flex gap-px">
              {r.map((c) => (
                <Swatch key={c} c={c} />
              ))}
            </div>
          ))}
          <div className="mt-[2px] flex gap-px">
            <Folder />
            {greys.map((c) => (
              <Swatch key={c} c={c} />
            ))}
          </div>
          <div className="mt-[2px] flex gap-px">
            <Folder />
            {brights.map((c) => (
              <Swatch key={c} c={c} />
            ))}
          </div>
        </div>
        <div className="flex w-3 flex-col items-center justify-between border-l border-[#2a2a2a] bg-[#3b3b3b] py-1 text-[#888]">
          <Tri dir="up" />
          <Tri />
        </div>
      </div>
      <div className="flex h-5 items-center pr-px pl-2">
        <svg width="18" height="12" viewBox="0 0 18 12">
          <path d="M1.500 1v10M4.500 0v11M7 1l5 10" stroke="#bbb" strokeWidth="1.800" />
          <path d="M12.500 8H18l-2.700 3z" fill="#ccc" />
        </svg>
        <svg width="17" height="12" viewBox="0 0 17 12" className="ml-[58px]">
          <path d="M0 0h11v11H0z" fill="#bbb" />
          <path d="M0 3.500h11M0 7h11M3.500 0v11M7 0v11" stroke="#333" />
          <path d="M11.500 8H17l-2.700 3z" fill="#ccc" />
        </svg>
        <svg width="11" height="11" viewBox="0 0 11 11" className="ml-[11px]">
          <path d="M.5.5h10v10H.5zM2 3h1M4 3h5M2 5.500h1M4 5.500h5M2 8h1M4 8h5" fill="none" stroke="#6e6e6e" />
        </svg>
        <Folder className="ml-[15px]" />
        <div className="ml-[14px]"><NewIcon /></div>
        <div className="ml-[15px]"><Trash /></div>
        <div className="flex-1" />
        <Grip />
      </div>
    </Panel>
  );
}

function StrokePanel() {
  return (
    <Panel className="mt-px">
      <Tabs names={["描边", "渐变", "透明度"]} arrow />
      <div className="flex h-[31px] items-center pl-[5px] text-xs text-[#e4e4e4]">
        <label htmlFor="weight" className="mr-[3px] w-7">粗细:</label>
        <Spinner />
        <Field id="weight" value="0.4 pt" w="w-[53px]" />
        <DropBtn label="粗细选项" />
      </div>
    </Panel>
  );
}

function AttrRow({ lit, dim, children }: Kids & { lit?: boolean; dim?: boolean }) {
  return (
    <div className={"flex h-[25px] items-center border-b border-[#2c2c2c] " + (lit ? "bg-[#595959]" : "")}>
      <div className="flex h-full w-[25px] shrink-0 items-center justify-center border-r border-[#2c2c2c]">
        <Eye dim={dim} />
      </div>
      {children}
    </div>
  );
}

function Opacity() {
  return (
    <>
      <OrangeLabel>不透明度:</OrangeLabel>
      <span className="ml-[5px]">默认值</span>
    </>
  );
}

function AppearancePanel() {
  return (
    <Panel className="mt-px">
      <Tabs names={["外观", "图形样式"]} />
      <div className="mx-[5px] mt-[5px] flex h-[184px] flex-col border border-[#2a2a2a] text-xs text-[#ececec]">
        <div className="flex h-[25px] items-center border-b border-[#2c2c2c] pl-[2px]">
          <div className="h-[19px] w-[19px] border border-[#222] bg-white p-px"><div className="h-full border border-[#bbb]" /></div>
          <b className="ml-[26px]">路径</b>
        </div>
        <AttrRow>
          <Tri className="ml-1" size={8} />
          <div className="ml-[10px] flex w-[42px]"><OrangeLabel>描边:</OrangeLabel></div>
          <svg width="17" height="17" viewBox="0 0 17 17">
            <path d="M.5.5h16v16H.5z" fill="#fff" stroke="#111" />
            <path d="M3 3h11v11H3z" fill="#000" stroke="#111" />
            <path d="M2.500 2.500h12v12h-12z" fill="none" stroke="#fff" />
          </svg>
          <span className="ml-[14px] font-['DejaVu_Sans_Mono',monospace] text-[10px]">0.4 pt</span>
        </AttrRow>
        <AttrRow lit dim><div className="ml-[42px] flex items-center"><Opacity /></div></AttrRow>
        <AttrRow>
          <Tri className="ml-1" size={8} />
          <div className="ml-[10px] w-[42px]">填色:</div>
          <svg width="17" height="17" viewBox="0 0 17 17">
            <path d="M.5.5h16v16H.5z" fill="#fff" stroke="#111" />
            <path d="M2.500 2.500h12v12h-12z" fill="#fff" stroke="#111" />
            <path d="M4 13l9-9" stroke="#d8203c" strokeWidth="2" />
          </svg>
        </AttrRow>
        <AttrRow lit dim><div className="ml-[42px] flex items-center"><Opacity /></div></AttrRow>
        <AttrRow dim><div className="ml-[22px] flex items-center"><Opacity /></div></AttrRow>
      </div>
      <div className="flex h-[19px] items-center pr-px pl-[11px]">
        <svg width="10" height="10"><path d="M1.500 1.500h7v7h-7z" fill="none" stroke="#ccc" strokeWidth="2" /></svg>
        <svg width="10" height="10" className="ml-4"><path d="M.5.5h9v9h-9z" fill="none" stroke="#ccc" /><path d="M2 2h6v6H2z" fill="#bbb" /></svg>
        <span className="ml-[14px] font-['Liberation_Serif',serif] text-base leading-4 text-[#ccc] italic">fx</span>
        <Tri size={5} className="mt-2 text-[#ccc]" />
        <svg width="11" height="11" viewBox="0 0 11 11" className="ml-[60px]">
          <circle cx="5.500" cy="5.500" r="4.500" fill="none" stroke="#bbb" strokeWidth="1.800" />
          <path d="M2.500 2.500l6 6" stroke="#bbb" strokeWidth="1.800" />
        </svg>
        <div className="ml-4"><NewIcon /></div>
        <div className="ml-[14px]"><Trash /></div>
        <div className="flex-1" />
        <Grip />
      </div>
    </Panel>
  );
}

function LayersPanel() {
  return (
    <Panel className="mt-px min-h-0 flex-1 border-b-0">
      <Tabs names={["图层", "画板"]} />
      <div className="mx-[5px] mt-[5px] flex min-h-0 flex-1 flex-col border border-[#2a2a2a]">
        <div className="relative flex h-[21px] items-stretch border-b border-[#2c2c2c] bg-[#5c6472] text-xs text-[#eee]">
          <div className="flex w-[21px] items-center justify-center border-r border-[#333]"><Eye /></div>
          <div className="w-[21px] border-r border-[#333]" />
          <div className="w-[5px] border-r border-[#333] bg-[#4f80ff]" />
          <div className="flex flex-1 items-center pl-[6px]">
            <Tri dir="right" />
            <div className="ml-[9px] flex h-[18px] w-[18px] border border-black bg-white pt-[5px] pl-[6px]">
              <div className="h-[3px] w-[2px] bg-black" /><div className="h-[3px] w-px bg-red-500" />
            </div>
            <span className="ml-[6px]">图层 1</span>
          </div>
          <div className="flex w-[35px] items-center border-l border-[#333] pl-[5px]">
            <svg width="10" height="10"><circle cx="5" cy="5" r="4" fill="none" stroke="#aaa" strokeWidth="1.400" /></svg>
            <div className="ml-[6px] h-[6px] w-[6px] border border-black bg-[#4f80ff]" />
          </div>
          <svg width="5" height="5" className="absolute top-0 right-0"><path d="M0 0h5v5z" fill="#ccc" /></svg>
        </div>
      </div>
      <div className="flex h-2 shrink-0 items-start pl-1 text-xs leading-4 text-[#ddd]">
        <span className="w-[83px] pt-px">1 个图层</span>
        <svg width="120" height="9" viewBox="0 0 120 9" className="pt-px">
          <path d="M2 9a4.500 4.500 0 1 1 8 0" fill="none" stroke="#bbb" strokeWidth="1.800" />
          <path d="M25 4h7v5h-7zM29 7h6v2" fill="none" stroke="#bbb" strokeWidth="1.500" />
          <path d="M50 3v6M52 5h4M56 4h7v5h-7z" fill="#bbb" stroke="#bbb" />
          <path d="M77 5h11v4H77z" fill="#bbb" />
          <path d="M103 6h11M106 6V4h4v2" fill="none" stroke="#777" />
        </svg>
      </div>
    </Panel>
  );
}

function RightDock() {
  return (
    <div className="flex w-[233px] shrink-0 flex-col bg-[#3a3a3a] pr-[2px]">
      <div className="flex h-[11px] shrink-0 items-center justify-end bg-[#303030] pr-[5px]">
        <svg width="8" height="6" viewBox="0 0 8 6"><path d="M0 0l4 3-4 3zM4 0l4 3-4 3z" fill="#bbb" /></svg>
      </div>
      <ColorPanel />
      <SwatchPanel />
      <StrokePanel />
      <AppearancePanel />
      <LayersPanel />
    </div>
  );
}

/* ---------- input method bar ---------- */

function SogouMark({ size }: { size: number }) {
  return (
    <svg width={size} height={size} viewBox="0 0 30 30" className="shrink-0">
      <path d="M3 5Q0 5 1 8l4 18q1 4 5 3l16-3q4-1 3-5L25 3q-1-3-4-2z" fill="#f4581c" />
      <path d="M24 8C17 5 7 6 7 11c0 6 14 3 14 8 0 4-9 5-15 2" fill="none" stroke="#fff" strokeWidth="4.500" />
    </svg>
  );
}

function ImeBar() {
  const b = "#0a6fd8";
  return (
    <div className="absolute top-[160px] right-[167px] z-20 flex h-[30px] items-end">
      <div className="z-10 -mr-[6px]"><SogouMark size={31} /></div>
      <div className="flex h-[26px] w-[153px] items-center justify-between rounded-sm border border-[#b4cdea] bg-white pr-[4px] pl-[11px]">
        <span className="text-[15px] leading-none font-bold text-[#0a6fd8]">中</span>
        <svg width="12" height="12" viewBox="0 0 12 12"><circle cx="2.500" cy="3" r="1.700" fill="none" stroke={b} strokeWidth="1.300" /><path d="M9 6a2 2 0 1 1 2 2c0 2-1 3-3 4 1-1 1-2 1-3a2 2 0 0 1 0-3z" fill={b} /></svg>
        <svg width="13" height="16" viewBox="0 0 13 16"><rect x="3.500" y="0" width="6" height="10" rx="3" fill={b} /><path d="M1 7c0 6 11 6 11 0M6.500 12v4" fill="none" stroke={b} strokeWidth="1.800" /></svg>
        <svg width="15" height="13" viewBox="0 0 15 13"><path d="M1 1h13v11H1z" fill="none" stroke={b} strokeWidth="1.800" /><path d="M3 4h9M3 6.500h9" stroke={b} strokeWidth="1.400" strokeDasharray="1.500 1" /><path d="M4 9h7" stroke={b} strokeWidth="1.400" /></svg>
        <svg width="15" height="14" viewBox="0 0 15 14"><path d="M4 0c1 2 6 2 7 0l4 3-2 4-1-1v8H3V6L2 7 0 3z" fill={b} /></svg>
        <svg width="14" height="14" viewBox="0 0 14 14"><rect width="6" height="6" rx="1.500" fill="#7a5cf0" /><rect x="9" y="1" width="4" height="4" rx="1.500" fill="none" stroke="#6a6cf5" strokeWidth="1.800" /><rect y="8" width="6" height="6" rx="1.500" fill="#a06fc0" /><rect x="8" y="8" width="6" height="6" rx="1.500" fill="#6a6cf5" /></svg>
      </div>
    </div>
  );
}

/* ---------- taskbar ---------- */

function Tile({ bg, fg, border, text, fs = 11 }: { bg: string; fg: string; border?: string; text: string; fs?: number }) {
  return (
    <svg width="24" height="24" viewBox="0 0 24 24">
      <rect x="1" y="1" width="22" height="22" rx="1" fill={bg} stroke={border ?? bg} strokeWidth="1.500" />
      <text x="12" y="16" textAnchor="middle" fontSize={fs} fontWeight="bold" fontFamily="Liberation Sans" fill={fg}>{text}</text>
    </svg>
  );
}

const apps: { name: string; icon: React.ReactNode; run?: boolean; cell?: string }[] = [
  { name: "Edge", run: true, icon: <svg width="24" height="24" viewBox="0 0 24 24"><circle cx="12" cy="12" r="11.500" fill="#1277c8" /><path d="M1 10C3-2 22-2 23.500 10c0 5-6 6-9 4 3-3 0-7-4-7-5 0-8 4-9 8z" fill="#45cf8f" /><path d="M1 9C3-1 17-3 21 6 14 1 5 3 1 12z" fill="#35c1e8" /><path d="M9 12c-2 6 5 10 12 7-4 6-17 6-19-4 0-6 5-8 9-7z" fill="#0c5aa5" /></svg> },
  { name: "文件资源管理器", run: true, icon: <svg width="24" height="24" viewBox="0 0 24 24"><path d="M1 4h9l2 2h11v15H1z" fill="#e8a92c" /><path d="M1 8h22v12H1z" fill="#fcd462" /><path d="M4 22v-8h16v8h-4v-4H8v4z" fill="#3d95dd" /></svg> },
  { name: "Microsoft Store", icon: <svg width="24" height="24" viewBox="0 0 24 24"><path d="M1 6h22v15q0 2-2 2H3q-2 0-2-2z" fill="#f2f2f2" /><path d="M8 6V2h8v4" fill="none" stroke="#33b0f0" strokeWidth="2" /><path d="M7 10h4v4H7z" fill="#f25022" /><path d="M13 10h4v4h-4z" fill="#7fba00" /><path d="M7 16h4v4H7z" fill="#00a4ef" /><path d="M13 16h4v4h-4z" fill="#ffb900" /></svg> },
  { name: "邮件", icon: <svg width="24" height="24" viewBox="0 0 24 24"><path d="M0 9l12-8 12 8v3H0z" fill="#0f5fae" /><path d="M0 9h24v14H0z" fill="#2aa4ee" /><path d="M3 9h18l-9 8z" fill="#f4f4f4" /></svg> },
  { name: "Firefox", icon: <svg width="24" height="24" viewBox="0 0 24 24"><circle cx="12" cy="13" r="10.500" fill="#ff5a36" /><path d="M14 1c3 3 9 6 8.500 13C22 21 14 25 8 22c8 0 11-5 9-10-1-3-4-5-3-11z" fill="#ffb52b" /><circle cx="11.500" cy="13" r="5" fill="#7542e5" /><path d="M2 9c1-3 2-3 2-5 2 3 5 2 7 5-3 0-4 1-4 3-2 0-4-1-5-3z" fill="#ff9a2b" /></svg> },
  { name: "CAJ", run: true, icon: <Tile bg="#ff5a0a" fg="#fff" text="CAJ" fs={10} /> },
  { name: "网易有道翻译", run: true, icon: <svg width="24" height="24" viewBox="0 0 24 24"><path d="M15 15h8l-1 7-7-1z" fill="#f06b8b" /><circle cx="11" cy="11" r="10.500" fill="#1d9af0" /><text x="11" y="15.500" textAnchor="middle" fontSize="12" fill="#fff" fontFamily="Noto Sans CJK SC">译</text></svg> },
  { name: "Acrobat", run: true, icon: <svg width="22" height="24" viewBox="0 0 22 24"><path d="M1 1h20v22H1z" fill="#2b0606" stroke="#b50f10" strokeWidth="1.500" /><path d="M5 17c3-1 6-5 6-10 1 5 3 7 7 7-5-1-9 0-13 3z" fill="none" stroke="#eee" strokeWidth="1.400" /></svg> },
  { name: "录屏", run: true, icon: <svg width="24" height="24" viewBox="0 0 24 24"><rect width="24" height="24" rx="5" fill="#f4511e" /><path d="M5 6l8 6-8 4zM13 12l6-4v11z" fill="#fff" /><path d="M5 5l14 13v-3L5 3z" fill="#fff" /></svg> },
  { name: "Word", run: true, icon: <svg width="24" height="24" viewBox="0 0 24 24"><path d="M7 2h16v20H7z" fill="#2f7bd8" /><path d="M7 2h16v5H7z" fill="#41a5ee" /><path d="M7 16h16v6H7z" fill="#153f91" /><path d="M0 6h13v12H0z" fill="#185abd" /><text x="6.500" y="15.500" textAnchor="middle" fontSize="10" fontWeight="bold" fontFamily="Liberation Sans" fill="#fff">W</text></svg> },
  { name: "SolidWorks", run: true, icon: <svg width="24" height="24" viewBox="0 0 24 24"><path d="M4 1h15l3 4v11H1V5z" fill="#d41424" /><text x="12" y="13" textAnchor="middle" fontSize="12" fontWeight="bold" fontFamily="Liberation Sans" fill="#fff">SW</text><text x="12" y="23" textAnchor="middle" fontSize="9" fontWeight="bold" fontFamily="Liberation Sans" fill="#fff">2020</text></svg> },
  { name: "Intel", run: true, icon: <svg width="24" height="24" viewBox="0 0 24 24"><rect x=".5" y=".5" width="23" height="23" rx="4" fill="#1687d4" stroke="#bfe0f5" /><path d="M3 15l5-6 3 5 5-8 4-1" fill="none" stroke="#fff" strokeWidth="2" /><ellipse cx="16" cy="18" rx="6" ry="3.500" fill="none" stroke="#9fe0ff" /></svg> },
  { name: "Workbench", run: true, icon: <svg width="24" height="24" viewBox="0 0 24 24"><path d="M0 0h24v24H0z" fill="#a8a8a8" /><path d="M12 6L5 24H0V0h24v24h-5z" fill="#8c8c8c" /><text x="12" y="16" textAnchor="middle" fontSize="11" fontWeight="bold" fontFamily="Liberation Sans" fill="#fff">WB</text></svg> },
  { name: "Photoshop", run: true, icon: <Tile bg="#001d26" fg="#00c8ff" border="#00c8ff" text="Ps" /> },
  { name: "Mechanical", run: true, icon: <svg width="24" height="24" viewBox="0 0 24 24"><path d="M0 0h24v24H0z" fill="#6a3d77" /><path d="M12 5L5 24h14z" fill="#4e2a5c" /><text x="12" y="17" textAnchor="middle" fontSize="13" fontWeight="bold" fontFamily="Liberation Sans" fill="#fff">M</text></svg> },
  { name: "照片", run: true, icon: <svg width="24" height="24" viewBox="0 0 24 24"><path d="M1 2h21v16H1z" fill="#dfe9f2" /><path d="M3 4h17v8H3z" fill="#4fb0ee" /><path d="M3 11l6-3 11 3v5H3z" fill="#28587c" /><path d="M7 18h15v3H9z" fill="#3a77b0" /></svg> },
  { name: "Illustrator", run: true, cell: "bg-[#46535f]", icon: <Tile bg="#2a1a05" fg="#ff9a00" border="#ff9a00" text="Ai" /> },
  { name: "浏览器", run: true, cell: "bg-[#aa6630]", icon: <svg width="24" height="24" viewBox="0 0 24 24"><circle cx="12" cy="12" r="11.500" fill="#e8e2c8" /><path d="M1 11C3 0 20-1 23 9c-6-5-14-3-16 3z" fill="#6f9a3a" /><path d="M8 9c4-4 13-2 14 4-4 3-11 2-14-4z" fill="#2b2b22" /><circle cx="7" cy="11" r="4" fill="#efe9d2" /><path d="M2 17c6 3 14 3 20 0l-3 4H5z" fill="#7c6a48" /></svg> },
  { name: "AutoCAD", run: true, icon: <svg width="24" height="24" viewBox="0 0 24 24"><path d="M2 18h21v5H2z" fill="#c41119" /><path d="M2 1h20v17H2z" fill="#2a2a2a" /><text x="10" y="18" textAnchor="middle" fontSize="20" fontWeight="bold" fontFamily="Liberation Serif" fill="#f2f2f2">A</text><path d="M17 4h4M17 9h4" stroke="#ccc" /></svg> },
  { name: "微信", run: true, icon: <svg width="24" height="24" viewBox="0 0 24 24"><ellipse cx="9.500" cy="9" rx="9" ry="7.500" fill="#3ddc6a" /><path d="M4 14l-1 4 4-2z" fill="#3ddc6a" /><ellipse cx="17" cy="16" rx="6.800" ry="5.600" fill="#f4f4f4" /><circle cx="6.500" cy="7" r="1.200" fill="#1b5a33" /><circle cx="12.500" cy="7" r="1.200" fill="#1b5a33" /><circle cx="15" cy="14.500" r=".9" fill="#888" /><circle cx="19" cy="14.500" r=".9" fill="#888" /></svg> },
];

function Taskbar() {
  return (
    <footer className="relative flex h-[39px] shrink-0 items-stretch bg-linear-to-r from-[#1f343b] via-[#1f3139] to-[#1b2840] text-white">
      <button aria-label="开始" className="flex w-12 shrink-0 items-center justify-center">
        <svg width="16" height="16" viewBox="0 0 16 16"><path d="M0 2.200L6.700 1.300v6.300H0zM7.500 1.200L16 0v7.600H7.500zM0 8.400h6.700v6.300L0 13.800zM7.500 8.400H16V16l-8.500-1.200z" fill="#fff" /></svg>
      </button>
      <label className="flex w-[344px] shrink-0 items-center bg-[#f2f2f2] pl-3">
        <svg width="16" height="16" viewBox="0 0 16 16"><circle cx="10" cy="6" r="5" fill="none" stroke="#222" strokeWidth="1.400" /><path d="M6.500 9.500L1 15" stroke="#222" strokeWidth="1.500" /></svg>
        <input placeholder="在这里输入你要搜索的内容" className="ml-3 flex-1 bg-transparent text-sm outline-none placeholder:text-[#333]" />
      </label>
      <button aria-label="Cortana" className="flex w-12 shrink-0 items-center justify-center">
        <svg width="18" height="18"><circle cx="9" cy="9" r="7" fill="none" stroke="#fff" strokeWidth="2" /></svg>
      </button>
      <button aria-label="任务视图" className="mr-[2px] flex w-12 shrink-0 items-center justify-center">
        <svg width="18" height="16" viewBox="0 0 18 16"><path d="M1.500 0v2.500h10V0M1.500 16v-2.500h10V16M1.500 5h10v6h-10zM15.500 0v16M14 5.500h3" fill="none" stroke="#fff" strokeWidth="1.200" /></svg>
      </button>
      {apps.map((a, i) => (
        <button key={a.name} aria-label={a.name} className={"relative flex shrink-0 items-center justify-center " + (i < 7 ? "w-[47px] " : "w-[46px] ") + (a.cell ?? "")}>
          {a.icon}
          {a.run && (
            <span className={"absolute bottom-0 h-[2px] " + (a.cell ? "inset-x-0 " : "inset-x-1 ") + (a.name === "浏览器" ? "bg-[#f5820b]" : "bg-[#76b9ed]")} />
          )}
        </button>
      ))}
      <div className="ml-[11px] grid grid-cols-[40px_auto] content-center text-[11px] leading-[13px] whitespace-nowrap">
        <span>U:</span><span>0.00 MB/s</span>
        <span>D:</span><span>0.00 MB/s</span>
      </div>
      <div className="flex-1" />
      <div className="flex shrink-0 items-center">
        <svg width="24" height="16" viewBox="0 0 24 16" className="mr-4"><path d="M1 1h20v14H1zM21 4h2v9q0 2-2 2M4 4.500h14M4 8h6v4H4zM12 8.500h6M12 11.500h6" fill="none" stroke="#fff" strokeWidth="1.400" /></svg>
        <svg width="12" height="7" viewBox="0 0 12 7" className="mr-[10px]"><path d="M1 6l5-5 5 5" fill="none" stroke="#fff" strokeWidth="1.400" /></svg>
        <svg width="16" height="11" viewBox="0 0 16 11" className="mr-2"><path d="M3.500 10.500a3.200 3.200 0 0 1 0-6.400C5 0 11 0 12 4.500a3 3 0 0 1 0 6z" fill="#eee" /></svg>
        <svg width="16" height="16" viewBox="0 0 16 16" className="mr-2"><circle cx="8" cy="8" r="7.500" fill="#1e7fb8" /><path d="M6 4l2 5 2-4 2 4 3-6" fill="none" stroke="#f33" strokeWidth="2" /><path d="M2 7h4" stroke="#fff" strokeWidth="1.500" /><path d="M3 12.500h9" stroke="#ffe600" strokeWidth="2" strokeDasharray="3 1" /></svg>
        <svg width="16" height="13" viewBox="0 0 16 13" className="mr-2"><path d="M5 2.500h10.500v7H5M8 12.500h6M10 9.500v3M.5.5h4v4h-4zM2.500 4.500v8h4" fill="none" stroke="#fff" strokeWidth="1.200" /></svg>
        <svg width="17" height="13" viewBox="0 0 17 13" className="mr-2"><path d="M.5 4h2.500l3-3v11L3 9H.5zM8.500 4.500q1.500 2 0 4M11 3q2.500 3.500 0 7" fill="none" stroke="#fff" strokeWidth="1.200" /><path d="M13.500 1q4 5.500 0 11" fill="none" stroke="#8a94a0" /></svg>
        <span className="mr-[13px] text-sm">中</span>
        <SogouMark size={16} />
        <div className="mr-6 ml-[21px] text-center text-xs leading-[19px]">
          <div>13:44</div>
          <div>2022/6/7</div>
        </div>
        <svg width="17" height="17" viewBox="0 0 17 17" className="mr-5"><path d="M1 1h15v12h-5l-3 3-3-3H1z" fill="none" stroke="#fff" strokeWidth="1.300" /></svg>
        <div className="mr-[9px] h-[39px] w-px bg-[#6d7682]" />
      </div>
    </footer>
  );
}

/* ---------- page ---------- */

export default function App() {
  return (
    <div className="relative flex h-screen flex-col overflow-hidden bg-[#484848] font-['Noto_Sans','Noto_Sans_CJK_SC',sans-serif]">
      <MenuBar />
      <ControlBar />
      <div className="flex min-h-0 flex-1">
        <main className="flex min-w-0 flex-1 flex-col">
          <div className="flex h-5 shrink-0 bg-linear-to-b from-[#383838] to-[#2c2c2c]">
            <button className="border-r border-[#222] bg-[#484848] pr-3 pl-[7px] text-xs whitespace-nowrap text-[#c4c4c4]">阀杆和阀盖之间的间隙.ai @ 300% (CMYK/预览)</button>
          </div>
          <div className="flex min-h-0 flex-1">
            <div className="relative flex-1 overflow-hidden bg-white">
              <Artwork />
            </div>
            <div className="relative flex w-[17px] flex-col items-center justify-between border-l border-[#222] bg-[#343434] py-[5px] text-[#d0d0d0]">
              <Tri dir="up" size={8} />
              <Tri size={8} />
              <div className="absolute top-[464px] right-0 left-0 h-4 border-y border-[#222] bg-[#8f8f8f]" />
            </div>
          </div>
          <div className="flex h-[5px] shrink-0 border-t border-[#222] bg-[#333]">
            <div className="mt-px h-[3px] w-[42px] bg-[#a3a3a3]" />
            <div className="h-1 w-[60px] bg-[#484848]" />
            <div className="mt-px h-[3px] w-[42px] bg-[#a3a3a3]" />
            <div className="h-1 w-[275px] bg-[#484848]" />
            <div className="flex-1" />
            <div className="mr-[637px] h-1 w-[15px] bg-[#8f8f8f]" />
          </div>
        </main>
        <div className="w-[2px] bg-[#222]" />
        <RightDock />
      </div>
      <Taskbar />

      <ToolPanel />
      <div className="absolute top-[27px] left-[264px] z-20">
        <PopupMenu items={selectMenu} className="top-0 left-0 w-[299px]" />
        <PopupMenu items={sameMenu} className="top-[168px] left-[293px] w-[166px]" />
      </div>
      <div className="pointer-events-none absolute top-px left-[256px] z-30 h-[38px] w-[79px] border-[3px] border-[#3b5bd9]" />
      <div className="pointer-events-none absolute top-[188px] left-[262px] z-30 h-9 w-[262px] border-[3px] border-[#3b5bd9]" />
      <div className="pointer-events-none absolute top-[328px] left-[563px] z-30 h-[29px] w-[148px] border-[3px] border-[#3b5bd9]" />
      <ImeBar />
    </div>
  );
}
